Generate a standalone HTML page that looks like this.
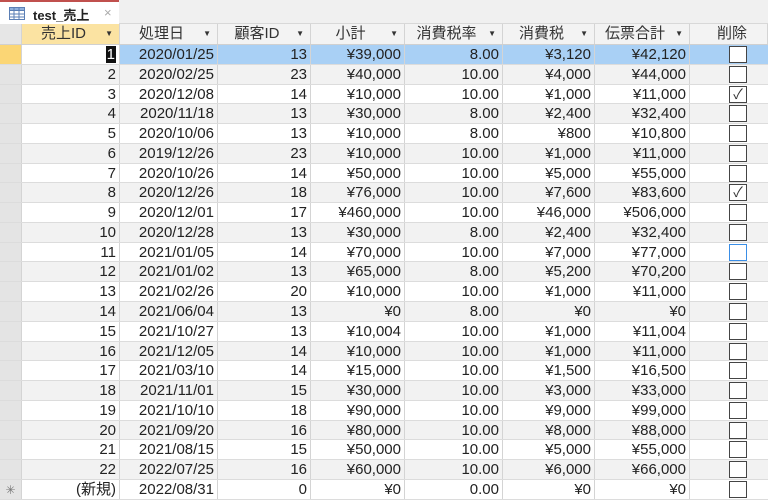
<!DOCTYPE html>
<html><head><meta charset="utf-8"><style>
*{margin:0;padding:0;box-sizing:border-box}
body{width:768px;height:503px;overflow:hidden;background:#fff;font-family:"Liberation Sans","Noto Sans CJK JP",sans-serif;font-size:15px;color:#222;position:relative}
.tabbar{position:absolute;left:0;top:0;width:768px;height:24px;background:#f0f0f0;border-bottom:1px solid #d8d8d8}
.tab{position:absolute;left:0;top:0;width:119px;height:25px;background:#fff;border-top:2px solid #c0504d;font-size:13px;font-weight:bold}
.tab span{position:absolute;left:33px;top:3px}
.tab i{position:absolute;left:104px;top:3px;font-style:normal;color:#aaa;font-weight:normal}
.hdr{position:absolute;top:24px;left:0;width:768px;height:21px;background:#f3f3f3;border-bottom:1px solid #d0d0d0}
.c{position:absolute;top:0;height:100%;border-right:1px solid #d4d4d4;white-space:nowrap;padding-right:3px;text-align:right;line-height:20px}
.hdr .c{text-align:center;padding:0 14px 0 0;color:#333}
.hdr .c b{position:absolute;right:6px;top:0;font-size:8px;font-weight:normal}
.row{position:absolute;left:0;width:768px;height:19.77px;border-bottom:1px solid #dcdcdc}
.row:nth-child(even){}
.g{background:#f2f2f2}
.sel{background:#e4e4e4}
.cb{position:absolute;left:729px;top:1px;width:18px;height:17px;border:1.5px solid #444;background:#fff;font-size:14px;line-height:14px;text-align:center;color:#333}
</style></head><body>
<div class="tabbar"></div>
<div class="tab"><svg style="position:absolute;left:9px;top:5px" width="16" height="13"><rect x="0.5" y="0.5" width="15" height="12" fill="#fff" stroke="#5b7fb5"/><rect x="0.5" y="0.5" width="15" height="3" fill="#8fb0dc" stroke="#5b7fb5"/><path d="M0 7h16M0 10h16M5 0v13M10 0v13" stroke="#5b7fb5"/></svg><span>test_売上</span><i>×</i></div>
<div class="hdr">
<div class="c" style="left:0;width:22px;background:#e6e6e6"></div>
<div class="c" style="left:22px;width:98px;background:#fbe3a2">売上ID<b>▼</b></div>
<div class="c" style="left:120px;width:98px">処理日<b>▼</b></div>
<div class="c" style="left:218px;width:93px">顧客ID<b>▼</b></div>
<div class="c" style="left:311px;width:94px">小計<b>▼</b></div>
<div class="c" style="left:405px;width:98px">消費税率<b>▼</b></div>
<div class="c" style="left:503px;width:92px">消費税<b>▼</b></div>
<div class="c" style="left:595px;width:95px">伝票合計<b>▼</b></div>
<div class="c" style="left:690px;width:78px;padding:0;text-align:left;padding-left:27px">削除</div>
</div>
<div id="rows">
<div class="row" style="top:45px;background:#a9d0f5"><div class="c" style="left:0;width:22px;background:#fbd675"></div><div class="c" style="left:22px;width:98px;background:#fff"><span style="background:#111;color:#fff;padding:0 1px">1</span></div><div class="c" style="left:120px;width:98px">2020/01/25</div><div class="c" style="left:218px;width:93px">13</div><div class="c" style="left:311px;width:94px">¥39,000</div><div class="c" style="left:405px;width:98px">8.00</div><div class="c" style="left:503px;width:92px">¥3,120</div><div class="c" style="left:595px;width:95px">¥42,120</div><div class="cb"></div></div>
<div class="row g" style="top:64.77px"><div class="c sel" style="left:0;width:22px"></div><div class="c" style="left:22px;width:98px">2</div><div class="c" style="left:120px;width:98px">2020/02/25</div><div class="c" style="left:218px;width:93px">23</div><div class="c" style="left:311px;width:94px">¥40,000</div><div class="c" style="left:405px;width:98px">10.00</div><div class="c" style="left:503px;width:92px">¥4,000</div><div class="c" style="left:595px;width:95px">¥44,000</div><div class="cb"></div></div>
<div class="row" style="top:84.54px"><div class="c sel" style="left:0;width:22px"></div><div class="c" style="left:22px;width:98px">3</div><div class="c" style="left:120px;width:98px">2020/12/08</div><div class="c" style="left:218px;width:93px">14</div><div class="c" style="left:311px;width:94px">¥10,000</div><div class="c" style="left:405px;width:98px">10.00</div><div class="c" style="left:503px;width:92px">¥1,000</div><div class="c" style="left:595px;width:95px">¥11,000</div><div class="cb">✓</div></div>
<div class="row g" style="top:104.31px"><div class="c sel" style="left:0;width:22px"></div><div class="c" style="left:22px;width:98px">4</div><div class="c" style="left:120px;width:98px">2020/11/18</div><div class="c" style="left:218px;width:93px">13</div><div class="c" style="left:311px;width:94px">¥30,000</div><div class="c" style="left:405px;width:98px">8.00</div><div class="c" style="left:503px;width:92px">¥2,400</div><div class="c" style="left:595px;width:95px">¥32,400</div><div class="cb"></div></div>
<div class="row" style="top:124.08px"><div class="c sel" style="left:0;width:22px"></div><div class="c" style="left:22px;width:98px">5</div><div class="c" style="left:120px;width:98px">2020/10/06</div><div class="c" style="left:218px;width:93px">13</div><div class="c" style="left:311px;width:94px">¥10,000</div><div class="c" style="left:405px;width:98px">8.00</div><div class="c" style="left:503px;width:92px">¥800</div><div class="c" style="left:595px;width:95px">¥10,800</div><div class="cb"></div></div>
<div class="row g" style="top:143.85px"><div class="c sel" style="left:0;width:22px"></div><div class="c" style="left:22px;width:98px">6</div><div class="c" style="left:120px;width:98px">2019/12/26</div><div class="c" style="left:218px;width:93px">23</div><div class="c" style="left:311px;width:94px">¥10,000</div><div class="c" style="left:405px;width:98px">10.00</div><div class="c" style="left:503px;width:92px">¥1,000</div><div class="c" style="left:595px;width:95px">¥11,000</div><div class="cb"></div></div>
<div class="row" style="top:163.62px"><div class="c sel" style="left:0;width:22px"></div><div class="c" style="left:22px;width:98px">7</div><div class="c" style="left:120px;width:98px">2020/10/26</div><div class="c" style="left:218px;width:93px">14</div><div class="c" style="left:311px;width:94px">¥50,000</div><div class="c" style="left:405px;width:98px">10.00</div><div class="c" style="left:503px;width:92px">¥5,000</div><div class="c" style="left:595px;width:95px">¥55,000</div><div class="cb"></div></div>
<div class="row g" style="top:183.39px"><div class="c sel" style="left:0;width:22px"></div><div class="c" style="left:22px;width:98px">8</div><div class="c" style="left:120px;width:98px">2020/12/26</div><div class="c" style="left:218px;width:93px">18</div><div class="c" style="left:311px;width:94px">¥76,000</div><div class="c" style="left:405px;width:98px">10.00</div><div class="c" style="left:503px;width:92px">¥7,600</div><div class="c" style="left:595px;width:95px">¥83,600</div><div class="cb">✓</div></div>
<div class="row" style="top:203.16px"><div class="c sel" style="left:0;width:22px"></div><div class="c" style="left:22px;width:98px">9</div><div class="c" style="left:120px;width:98px">2020/12/01</div><div class="c" style="left:218px;width:93px">17</div><div class="c" style="left:311px;width:94px">¥460,000</div><div class="c" style="left:405px;width:98px">10.00</div><div class="c" style="left:503px;width:92px">¥46,000</div><div class="c" style="left:595px;width:95px">¥506,000</div><div class="cb"></div></div>
<div class="row g" style="top:222.93px"><div class="c sel" style="left:0;width:22px"></div><div class="c" style="left:22px;width:98px">10</div><div class="c" style="left:120px;width:98px">2020/12/28</div><div class="c" style="left:218px;width:93px">13</div><div class="c" style="left:311px;width:94px">¥30,000</div><div class="c" style="left:405px;width:98px">8.00</div><div class="c" style="left:503px;width:92px">¥2,400</div><div class="c" style="left:595px;width:95px">¥32,400</div><div class="cb"></div></div>
<div class="row" style="top:242.7px"><div class="c sel" style="left:0;width:22px"></div><div class="c" style="left:22px;width:98px">11</div><div class="c" style="left:120px;width:98px">2021/01/05</div><div class="c" style="left:218px;width:93px">14</div><div class="c" style="left:311px;width:94px">¥70,000</div><div class="c" style="left:405px;width:98px">10.00</div><div class="c" style="left:503px;width:92px">¥7,000</div><div class="c" style="left:595px;width:95px">¥77,000</div><div class="cb" style="border-color:#3a8ee6"></div></div>
<div class="row g" style="top:262.47px"><div class="c sel" style="left:0;width:22px"></div><div class="c" style="left:22px;width:98px">12</div><div class="c" style="left:120px;width:98px">2021/01/02</div><div class="c" style="left:218px;width:93px">13</div><div class="c" style="left:311px;width:94px">¥65,000</div><div class="c" style="left:405px;width:98px">8.00</div><div class="c" style="left:503px;width:92px">¥5,200</div><div class="c" style="left:595px;width:95px">¥70,200</div><div class="cb"></div></div>
<div class="row" style="top:282.24px"><div class="c sel" style="left:0;width:22px"></div><div class="c" style="left:22px;width:98px">13</div><div class="c" style="left:120px;width:98px">2021/02/26</div><div class="c" style="left:218px;width:93px">20</div><div class="c" style="left:311px;width:94px">¥10,000</div><div class="c" style="left:405px;width:98px">10.00</div><div class="c" style="left:503px;width:92px">¥1,000</div><div class="c" style="left:595px;width:95px">¥11,000</div><div class="cb"></div></div>
<div class="row g" style="top:302.01px"><div class="c sel" style="left:0;width:22px"></div><div class="c" style="left:22px;width:98px">14</div><div class="c" style="left:120px;width:98px">2021/06/04</div><div class="c" style="left:218px;width:93px">13</div><div class="c" style="left:311px;width:94px">¥0</div><div class="c" style="left:405px;width:98px">8.00</div><div class="c" style="left:503px;width:92px">¥0</div><div class="c" style="left:595px;width:95px">¥0</div><div class="cb"></div></div>
<div class="row" style="top:321.78px"><div class="c sel" style="left:0;width:22px"></div><div class="c" style="left:22px;width:98px">15</div><div class="c" style="left:120px;width:98px">2021/10/27</div><div class="c" style="left:218px;width:93px">13</div><div class="c" style="left:311px;width:94px">¥10,004</div><div class="c" style="left:405px;width:98px">10.00</div><div class="c" style="left:503px;width:92px">¥1,000</div><div class="c" style="left:595px;width:95px">¥11,004</div><div class="cb"></div></div>
<div class="row g" style="top:341.55px"><div class="c sel" style="left:0;width:22px"></div><div class="c" style="left:22px;width:98px">16</div><div class="c" style="left:120px;width:98px">2021/12/05</div><div class="c" style="left:218px;width:93px">14</div><div class="c" style="left:311px;width:94px">¥10,000</div><div class="c" style="left:405px;width:98px">10.00</div><div class="c" style="left:503px;width:92px">¥1,000</div><div class="c" style="left:595px;width:95px">¥11,000</div><div class="cb"></div></div>
<div class="row" style="top:361.32px"><div class="c sel" style="left:0;width:22px"></div><div class="c" style="left:22px;width:98px">17</div><div class="c" style="left:120px;width:98px">2021/03/10</div><div class="c" style="left:218px;width:93px">14</div><div class="c" style="left:311px;width:94px">¥15,000</div><div class="c" style="left:405px;width:98px">10.00</div><div class="c" style="left:503px;width:92px">¥1,500</div><div class="c" style="left:595px;width:95px">¥16,500</div><div class="cb"></div></div>
<div class="row g" style="top:381.09px"><div class="c sel" style="left:0;width:22px"></div><div class="c" style="left:22px;width:98px">18</div><div class="c" style="left:120px;width:98px">2021/11/01</div><div class="c" style="left:218px;width:93px">15</div><div class="c" style="left:311px;width:94px">¥30,000</div><div class="c" style="left:405px;width:98px">10.00</div><div class="c" style="left:503px;width:92px">¥3,000</div><div class="c" style="left:595px;width:95px">¥33,000</div><div class="cb"></div></div>
<div class="row" style="top:400.86px"><div class="c sel" style="left:0;width:22px"></div><div class="c" style="left:22px;width:98px">19</div><div class="c" style="left:120px;width:98px">2021/10/10</div><div class="c" style="left:218px;width:93px">18</div><div class="c" style="left:311px;width:94px">¥90,000</div><div class="c" style="left:405px;width:98px">10.00</div><div class="c" style="left:503px;width:92px">¥9,000</div><div class="c" style="left:595px;width:95px">¥99,000</div><div class="cb"></div></div>
<div class="row g" style="top:420.63px"><div class="c sel" style="left:0;width:22px"></div><div class="c" style="left:22px;width:98px">20</div><div class="c" style="left:120px;width:98px">2021/09/20</div><div class="c" style="left:218px;width:93px">16</div><div class="c" style="left:311px;width:94px">¥80,000</div><div class="c" style="left:405px;width:98px">10.00</div><div class="c" style="left:503px;width:92px">¥8,000</div><div class="c" style="left:595px;width:95px">¥88,000</div><div class="cb"></div></div>
<div class="row" style="top:440.4px"><div class="c sel" style="left:0;width:22px"></div><div class="c" style="left:22px;width:98px">21</div><div class="c" style="left:120px;width:98px">2021/08/15</div><div class="c" style="left:218px;width:93px">15</div><div class="c" style="left:311px;width:94px">¥50,000</div><div class="c" style="left:405px;width:98px">10.00</div><div class="c" style="left:503px;width:92px">¥5,000</div><div class="c" style="left:595px;width:95px">¥55,000</div><div class="cb"></div></div>
<div class="row g" style="top:460.17px"><div class="c sel" style="left:0;width:22px"></div><div class="c" style="left:22px;width:98px">22</div><div class="c" style="left:120px;width:98px">2022/07/25</div><div class="c" style="left:218px;width:93px">16</div><div class="c" style="left:311px;width:94px">¥60,000</div><div class="c" style="left:405px;width:98px">10.00</div><div class="c" style="left:503px;width:92px">¥6,000</div><div class="c" style="left:595px;width:95px">¥66,000</div><div class="cb"></div></div>
<div class="row" style="top:479.94px"><div class="c sel" style="left:0;width:22px;text-align:center;padding:0;color:#777;font-size:12px">✳</div><div class="c" style="left:22px;width:98px">(新規)</div><div class="c" style="left:120px;width:98px">2022/08/31</div><div class="c" style="left:218px;width:93px">0</div><div class="c" style="left:311px;width:94px">¥0</div><div class="c" style="left:405px;width:98px">0.00</div><div class="c" style="left:503px;width:92px">¥0</div><div class="c" style="left:595px;width:95px">¥0</div><div class="cb"></div></div>
</div>
</body></html>
